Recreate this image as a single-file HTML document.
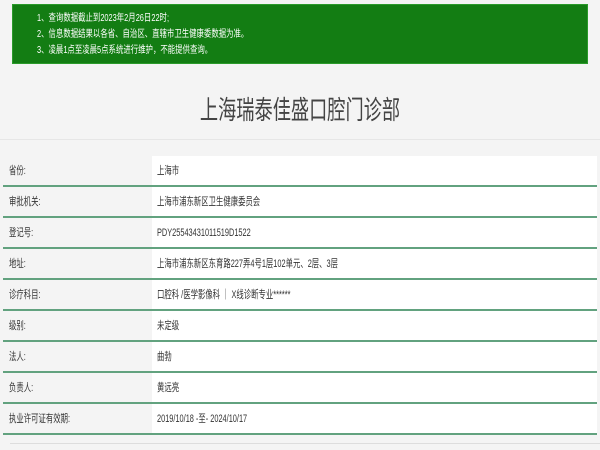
<!DOCTYPE html>
<html><head><meta charset="utf-8"><style>
*{margin:0;padding:0;box-sizing:border-box}
body{width:600px;height:450px;background:#f4f4f4;font-family:"Liberation Sans","Noto Sans CJK SC",sans-serif;overflow:hidden;position:relative}
.c{display:inline-block;transform:scaleX(0.67);transform-origin:left center;white-space:nowrap}
.notice{position:absolute;left:12px;top:4px;width:576px;height:60px;background:#137d13;border:1px solid #2a9a2a}
.notice .c{transform:scaleX(0.74)}
.notice div{position:absolute;left:24px;color:#fff;font-size:10px;line-height:12px}
.title{position:absolute;left:0;width:600px;top:94px;text-align:center;color:#444;font-size:26px;line-height:32px}
.title span{display:inline-block;transform:scaleX(0.7)}
.hr{position:absolute;left:0;top:139px;width:600px;height:1px;background:#e6e6e6}
.tbl{position:absolute;left:3px;top:156px;width:594px}
.row{height:31px;position:relative;border-bottom:2px solid #62a27f;background:#fff}
.row .l{position:absolute;left:0;top:0;width:149px;height:29px;background:#f4f4f4}
.row span{position:absolute;top:8px;font-size:11px;line-height:14px;color:#333}
.row .lt{left:6px}
.row .vt{left:154px}
.bot{position:absolute;left:10px;top:443px;width:590px;height:1px;background:#ddd}
</style></head><body>
<div class="notice">
<div style="top:8px"><span class="c">1、查询数据截止到2023年2月26日22时;</span></div>
<div style="top:24px"><span class="c">2、信息数据结果以各省、自治区、直辖市卫生健康委数据为准。</span></div>
<div style="top:40px"><span class="c">3、凌晨1点至凌晨5点系统进行维护，不能提供查询。</span></div>
</div>
<div class="title"><span>上海瑞泰佳盛口腔门诊部</span></div>
<div class="hr"></div>
<div class="tbl">
<div class="row"><div class="l"></div><span class="lt c">省份:</span><span class="vt c">上海市</span></div>
<div class="row"><div class="l"></div><span class="lt c">审批机关:</span><span class="vt c">上海市浦东新区卫生健康委员会</span></div>
<div class="row"><div class="l"></div><span class="lt c">登记号:</span><span class="vt c">PDY25543431011519D1522</span></div>
<div class="row"><div class="l"></div><span class="lt c">地址:</span><span class="vt c">上海市浦东新区东育路227弄4号1层102单元、2层、3层</span></div>
<div class="row"><div class="l"></div><span class="lt c">诊疗科目:</span><span class="vt c">口腔科 /医学影像科 ｜ X线诊断专业******</span></div>
<div class="row"><div class="l"></div><span class="lt c">级别:</span><span class="vt c">未定级</span></div>
<div class="row"><div class="l"></div><span class="lt c">法人:</span><span class="vt c">曲勃</span></div>
<div class="row"><div class="l"></div><span class="lt c">负责人:</span><span class="vt c">黄远亮</span></div>
<div class="row"><div class="l"></div><span class="lt c">执业许可证有效期:</span><span class="vt c">2019/10/18 -至- 2024/10/17</span></div>
</div>
<div class="bot"></div>
</body></html>
